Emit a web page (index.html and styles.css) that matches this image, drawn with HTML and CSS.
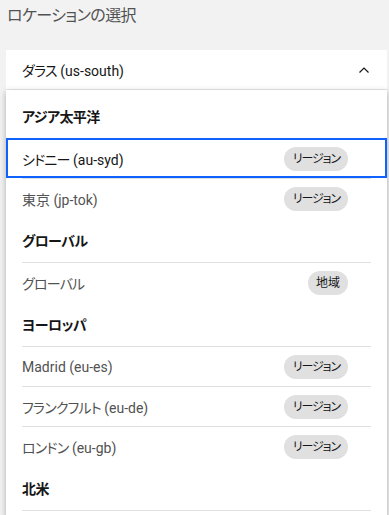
FILE: index.html
```html
<!DOCTYPE html>
<html lang="ja">
<head>
<meta charset="utf-8">
<link rel="stylesheet" href="styles.css">
</head>
<body>
<div class="page">
  <div class="title">ロケーションの選択</div>
  <div class="dropdown">
    <div class="field">
      <span class="field-text"><span class="ja">ダラス</span> (us-south)</span>
      <svg class="chevron" width="10" height="6" viewBox="0 0 10 6"><path d="M0.5 5.5 L5 1 L9.5 5.5" fill="none" stroke="#161616" stroke-width="1.2"/></svg>
    </div>
    <div class="menu">
      <div class="group-title">アジア太平洋</div>
      <div class="item focused"><div class="item-inner"><span class="label"><span class="ja">シドニー</span> (au-syd)</span><span class="tag">リージョン</span></div></div>
      <div class="item"><div class="item-inner"><span class="label">東京 (jp-tok)</span><span class="tag">リージョン</span></div></div>
      <div class="group-title">グローバル</div>
      <div class="item"><div class="item-inner"><span class="label"><span class="ja">グローバル</span></span><span class="tag tag-wide">地域</span></div></div>
      <div class="group-title">ヨーロッパ</div>
      <div class="item"><div class="item-inner"><span class="label">Madrid (eu-es)</span><span class="tag">リージョン</span></div></div>
      <div class="item"><div class="item-inner"><span class="label"><span class="ja">フランクフルト</span> (eu-de)</span><span class="tag">リージョン</span></div></div>
      <div class="item"><div class="item-inner"><span class="label"><span class="ja">ロンドン</span> (eu-gb)</span><span class="tag">リージョン</span></div></div>
      <div class="group-title">北米</div>
      <div class="divider"></div>
    </div>
  </div>
</div>
</body>
</html>
```

FILE: styles.css
```css
* { box-sizing: border-box; }
html, body {
  margin: 0;
  padding: 0;
  background: #f2f2f2;
  overflow: hidden;
}
body {
  width: 389px;
  height: 515px;
  font-family: Roboto, "Noto Sans CJK JP", sans-serif;
  font-feature-settings: "palt";
  color: #161616;
}
.page {
  padding: 4px 2px 0 6px;
}
.title {
  font-size: 16px;
  line-height: 24px;
  letter-spacing: -0.6px;
  color: #525252;
  padding-left: 1px;
  margin-bottom: 22px;
}
.ja { letter-spacing: -0.8px; }
.field {
  height: 40px;
  background: #fff;
  border-bottom: 1px solid #e8e8e8;
  display: flex;
  align-items: center;
  justify-content: space-between;
  padding: 0 18px 0 16px;
  font-size: 14px;
}
.field-text { color: #161616; }
.chevron { display: block; }
.menu {
  background: #fff;
  box-shadow: 0 2px 6px rgba(0, 0, 0, 0.3);
  padding-top: 4px;
  padding-bottom: 6px;
}
.group-title {
  height: 44px;
  padding: 13px 16px 11px;
  font-size: 14px;
  line-height: 20px;
  font-weight: 700;
  letter-spacing: -0.6px;
  color: #161616;
}
.item {
  height: 40px;
  padding: 0 16px;
  font-size: 14px;
  color: #525252;
}
.item-inner {
  height: 40px;
  border-top: 1px solid #e0e0e0;
  display: flex;
  align-items: center;
  justify-content: space-between;
  padding-right: 23px;
}
.divider {
  margin: 0 16px;
  border-top: 1px solid #e0e0e0;
}
.item.focused {
  outline: 2px solid #0f62fe;
  outline-offset: -2px;
  color: #161616;
}
.item.focused .item-inner { border-top-color: transparent; }
.tag {
  height: 24px;
  line-height: 24px;
  padding: 0 8px 0 9px;
  border-radius: 12px;
  background: #e0e0e0;
  color: #161616;
  font-size: 12px;
  letter-spacing: -1.1px;
}
.tag-wide {
  letter-spacing: 0;
  padding: 0 8px;
}
```
